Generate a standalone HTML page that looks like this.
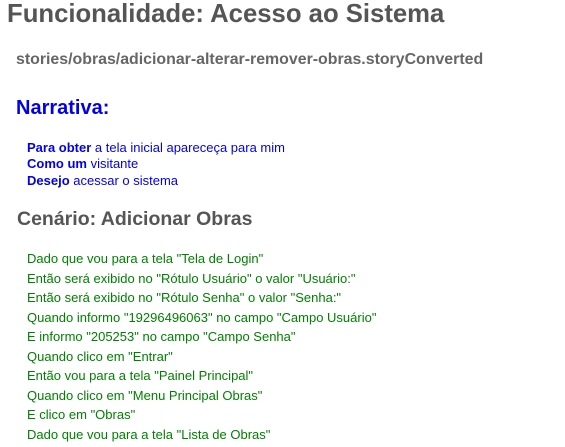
<!DOCTYPE html>
<html><head><meta charset="utf-8"><style>
body{margin:0;background:#fff;font-family:"Liberation Sans",sans-serif;width:565px;height:447px;overflow:hidden;position:relative}
div{position:absolute;white-space:nowrap}
.t{left:7px;top:0px;font-size:25.7px;font-weight:bold;color:#555}
.p{left:16px;top:51px;font-size:15.9px;font-weight:bold;color:#666}
.n{left:16px;top:97px;font-size:20px;font-weight:bold;color:#0000ee}
.nl{left:27px;font-size:13px;color:#0000ee}
.c{left:17px;top:208px;font-size:19.5px;font-weight:bold;color:#555}
.g{left:27px;font-size:13px;color:#008000}
</style></head><body>
<div class="t">Funcionalidade: Acesso ao Sistema</div>
<div class="p">stories/obras/adicionar-alterar-remover-obras.storyConverted</div>
<div class="n">Narrativa:</div>
<div class="nl" style="top:140px"><b>Para obter</b> a tela inicial apareceça para mim</div>
<div class="nl" style="top:156px"><b>Como um</b> visitante</div>
<div class="nl" style="top:173px"><b>Desejo</b> acessar o sistema</div>
<div class="c">Cenário: Adicionar Obras</div>
<div class="g" style="top:251px">Dado que vou para a tela "Tela de Login"</div>
<div class="g" style="top:271px">Então será exibido no "Rótulo Usuário" o valor "Usuário:"</div>
<div class="g" style="top:290px">Então será exibido no "Rótulo Senha" o valor "Senha:"</div>
<div class="g" style="top:310px">Quando informo "19296496063" no campo "Campo Usuário"</div>
<div class="g" style="top:329px">E informo "205253" no campo "Campo Senha"</div>
<div class="g" style="top:349px">Quando clico em "Entrar"</div>
<div class="g" style="top:368px">Então vou para a tela "Painel Principal"</div>
<div class="g" style="top:388px">Quando clico em "Menu Principal Obras"</div>
<div class="g" style="top:407px">E clico em "Obras"</div>
<div class="g" style="top:427px">Dado que vou para a tela "Lista de Obras"</div>
</body></html>
